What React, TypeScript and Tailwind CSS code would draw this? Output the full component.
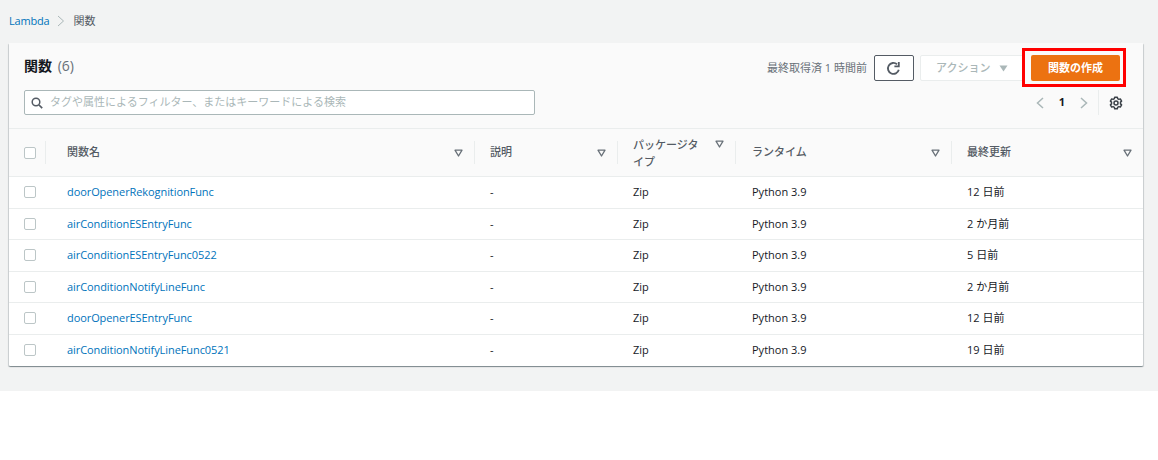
import React from "react";

const rows = [
  ["doorOpenerRekognitionFunc", "12 日前"],
  ["airConditionESEntryFunc", "2 か月前"],
  ["airConditionESEntryFunc0522", "5 日前"],
  ["airConditionNotifyLineFunc", "2 か月前"],
  ["doorOpenerESEntryFunc", "12 日前"],
  ["airConditionNotifyLineFunc0521", "19 日前"],
];

function SortIcon() {
  return (
    <svg width="9" height="8" viewBox="0 0 9 8" className="shrink-0">
      <path d="M1 1.2h7L4.500 7z" fill="#fafafa" stroke="#687078" strokeWidth="1.300" strokeLinejoin="round" />
    </svg>
  );
}

function Checkbox() {
  return <div className="w-[12px] h-[12px] rounded-[2px] border border-[#bcc6c7] bg-white" />;
}

const grid = "grid grid-cols-[36px_429px_143px_118px_216px_1fr]";

function Head({ label, wrap, pad, iconTop }: { label: React.ReactNode; wrap?: boolean; pad?: string; iconTop?: boolean }) {
  return (
    <div className={"relative flex pr-[11px] justify-between items-center h-full " + (pad ?? "pl-[16px]")}>
      <div className="absolute left-0 top-[12px] bottom-[12px] w-px bg-[#eaeded]" />
      <span className={wrap ? "font-medium text-[#545b64] leading-[17px] w-[72px]" : "font-medium text-[#545b64]"}>{label}</span>
      <span className={iconTop ? "self-start mt-[11px]" : ""}><SortIcon /></span>
    </div>
  );
}

export default function App() {
  return (
    <div className="w-[1158px] h-[460px] bg-white text-[11px] text-[#16191f]">
      <div className="h-[391px] bg-[#f2f3f3] font-['Open_Sans','Noto_Sans_CJK_JP',sans-serif] pl-[9px] pr-[15px]">
        <div className="h-[43px] flex items-start pt-[13px] gap-[8px] text-[#545b64] leading-[15px]">
          <span className="text-[#0073bb] tracking-[-0.2px]">Lambda</span>
          <svg width="8" height="12" viewBox="0 0 8 12" className="mt-[2px]">
            <path d="M1 1l5.500 5L1 11" fill="none" stroke="#aab7b8" strokeWidth="1" />
          </svg>
          <span>関数</span>
        </div>

        <div className="h-[323px] bg-white rounded-[1px] shadow-[0_1px_1px_0_rgba(0,28,36,0.3),1px_1px_1px_0_rgba(0,28,36,0.15),-1px_1px_1px_0_rgba(0,28,36,0.15)]">
          <div className="h-[86px] bg-[#fafafa] border-b border-[#eaeded] pl-[15px] pr-[23px] flex justify-between">
            <div className="pt-[13px]">
              <div className="text-[14px] leading-[20px]">
                <span className="font-bold">関数</span> <span className="text-[#687078] ml-[2px]">(6)</span>
              </div>
              <div className="mt-[14px] w-[511px] h-[25px] bg-white border border-[#aab7b8] rounded-[2px] flex items-center pl-[6px] gap-[7px]">
                <svg width="12" height="12" viewBox="0 0 12 12">
                  <circle cx="5" cy="5" r="3.800" fill="none" stroke="#545b64" strokeWidth="1.500" />
                  <path d="M8 8l3.200 3.200" stroke="#545b64" strokeWidth="1.700" />
                </svg>
                <span className="text-[#aab7b8]">タグや属性によるフィルター、またはキーワードによる検索</span>
              </div>
            </div>
            <div className="pt-[12px] flex flex-col items-end">
              <div className="flex items-center h-[26px]">
                <span className="text-[#687078] mr-[7px]">最終取得済 1 時間前</span>
                <div className="w-[40px] h-[26px] border border-[#545b64] rounded-[2px] bg-white flex items-center justify-center mr-[6px]">
                  <svg width="15" height="15" viewBox="0 0 15 15" className="-ml-[2px]">
                    <path d="M12.800 8.800A5.500 5.500 0 1 1 11 3.200" fill="none" stroke="#545b64" strokeWidth="1.800" />
                    <path d="M12.800 1v4.400H8.400" fill="none" stroke="#545b64" strokeWidth="1.800" />
                  </svg>
                </div>
                <div className="w-[104px] h-[26px] border border-[#eaeded] bg-white rounded-[2px] flex items-center pl-[15px] gap-[9px] font-medium text-[#aab7b8]">
                  <span>アクション</span>
                  <svg width="9" height="7" viewBox="0 0 9 7">
                    <path d="M0.500 0.500h8L4.500 6.500z" fill="#aab7b8" />
                  </svg>
                </div>
                <div className="relative w-[89px] h-[26px] bg-[#ec7211] rounded-[2px] flex items-center justify-center font-bold text-white ml-[7px]">
                  関数の作成
                  <div className="absolute left-[-9px] right-[-6px] top-[-7px] bottom-[-6px] border-[3px] border-[#ff0000]" />
                </div>
              </div>
              <div className="flex items-center h-[25px] mt-[9px] mr-[-3px]">
                <svg width="8" height="12" viewBox="0 0 8 12">
                  <path d="M7 1L1.500 6 7 11" fill="none" stroke="#aab7b8" strokeWidth="1.500" />
                </svg>
                <span className="font-bold w-[36px] text-center">1</span>
                <svg width="8" height="12" viewBox="0 0 8 12">
                  <path d="M1 1l5.500 5L1 11" fill="none" stroke="#aab7b8" strokeWidth="1.500" />
                </svg>
                <div className="w-px h-[25px] bg-[#eaeded] ml-[10px] mr-[10px]" />
                <svg width="14" height="14" viewBox="0 0 14 14">
                  <path d="M5.700 1.200h2.600l.3 1.500 1.300.7 1.400-.5 1.300 2.200-1.100 1v1.800l1.100 1-1.300 2.200-1.400-.5-1.300.7-.3 1.500H5.700l-.3-1.500-1.300-.7-1.400.5-1.300-2.200 1.100-1V6.100L1.400 5.100l1.300-2.200 1.400.5 1.300-.7z" fill="none" stroke="#3b4148" strokeWidth="1.500" strokeLinejoin="round" />
                  <circle cx="7" cy="7" r="2" fill="none" stroke="#3b4148" strokeWidth="1.500" />
                </svg>
              </div>
            </div>
          </div>

          <div className={grid + " h-[48px] bg-[#fafafa] border-b border-[#eaeded] items-stretch"}>
            <div className="flex items-center pl-[15px]"><Checkbox /></div>
            <Head label="関数名" pad="pl-[22px]" />
            <Head label="説明" />
            <Head label="パッケージタイプ" wrap iconTop />
            <Head label="ランタイム" pad="pl-[17px]" />
            <Head label="最終更新" />
          </div>

          {rows.map(([name, updated], i) => (
            <div key={name} className={grid + " h-[31.5px] items-center" + (i < rows.length - 1 ? " border-b border-[#eaeded]" : "")}>
              <div className="flex items-center pl-[15px]"><Checkbox /></div>
              <div className="pl-[22px] text-[#0073bb] tracking-[-0.08px]">{name}</div>
              <div className="pl-[16px]">-</div>
              <div className="pl-[16px]">Zip</div>
              <div className="pl-[17px]">Python 3.9</div>
              <div className="pl-[16px]">{updated}</div>
            </div>
          ))}
        </div>
      </div>
    </div>
  );
}
